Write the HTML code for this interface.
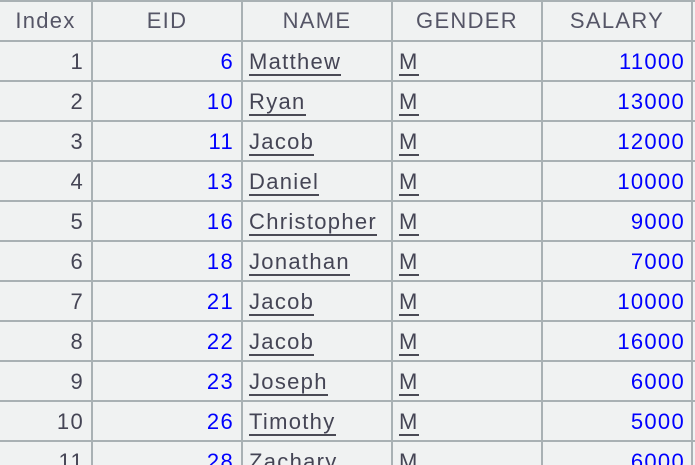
<!DOCTYPE html><html style="overflow:hidden;height:465px"><head><style>
body{margin:0;width:695px;height:465px;overflow:hidden;background:#f0f2f2;font-family:"Liberation Sans",sans-serif;font-size:22px;letter-spacing:1.3px;position:relative}
.h{position:absolute;left:0;width:695px;height:2px;background:#a9b1b4}
.v{position:absolute;top:0;height:465px;width:2px;background:#a9b1b4}
.c{position:absolute;height:40px;line-height:40px;white-space:nowrap}
.r{text-align:right}
.n{color:#0000ff}
.t{color:#454555}
.u{border-bottom:2px solid #4a4a55;line-height:24px;display:inline-block}
.hd{color:#555566;text-align:center}
</style></head><body>
<div id="g"></div>
<script>
var s='';
for(var y=0;y<=440;y+=40)s+='<div class="h" style="top:'+(y)+'px"></div>';
[91,241,391,541,691].forEach(function(x){s+='<div class="v" style="left:'+x+'px"></div>'});
var hs=[['Index',0,91],['EID',93,148],['NAME',243,148],['GENDER',393,148],['SALARY',543,148]];
hs.forEach(function(h){s+='<div class="c hd" style="top:1px;left:'+h[1]+'px;width:'+h[2]+'px">'+h[0]+'</div>'});
var d=[[6,'Matthew',11000],[10,'Ryan',13000],[11,'Jacob',12000],[13,'Daniel',10000],[16,'Christopher',9000],[18,'Jonathan',7000],[21,'Jacob',10000],[22,'Jacob',16000],[23,'Joseph',6000],[26,'Timothy',5000],[28,'Zachary',6000]];
d.forEach(function(r,i){var t=42+i*40;
s+='<div class="c r t" style="top:'+t+'px;left:0;width:84px">'+(i+1)+'</div>';
s+='<div class="c r n" style="top:'+t+'px;left:93px;width:141px">'+r[0]+'</div>';
s+='<div class="c t" style="top:'+(t+7)+'px;left:249px;height:auto;line-height:normal"><span class="u">'+r[1]+'</span></div>';
s+='<div class="c t" style="top:'+(t+7)+'px;left:399px;height:auto;line-height:normal"><span class="u">M</span></div>';
s+='<div class="c r n" style="top:'+t+'px;left:543px;width:142px">'+r[2]+'</div>';
});
document.getElementById('g').innerHTML=s;
</script>
</body></html>
